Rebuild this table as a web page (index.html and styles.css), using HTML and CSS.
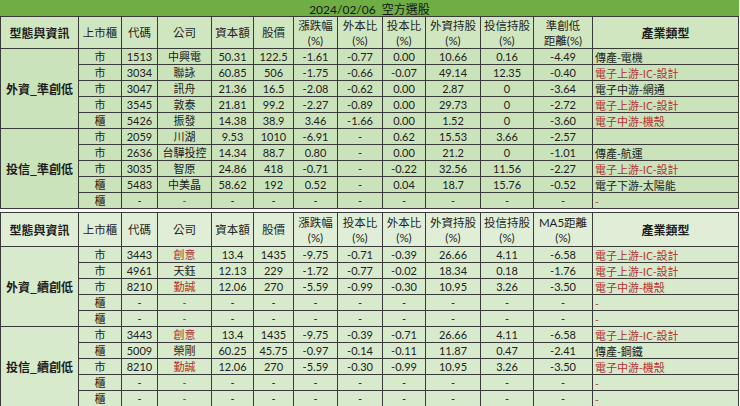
FILE: index.html
```html
<!DOCTYPE html>
<html lang="zh-Hant">
<head>
<meta charset="utf-8">
<title>2024/02/06 空方選股</title>
<link rel="stylesheet" href="styles.css">
</head>
<body>
<div class="sheet">
  <div class="title">2024/02/06&nbsp;&nbsp;空方選股</div>

  <div class="h h1 hk">型態與資訊</div>
  <div class="h h1">上市櫃</div>
  <div class="h h1">代碼</div>
  <div class="h h1">公司</div>
  <div class="h h1">資本額</div>
  <div class="h h1">股價</div>
  <div class="h h1"><span>漲跌幅</span><span class="pc">(%)</span></div>
  <div class="h h1"><span>外本比</span><span class="pc">(%)</span></div>
  <div class="h h1"><span>投本比</span><span class="pc">(%)</span></div>
  <div class="h h1"><span>外資持股</span><span class="pc">(%)</span></div>
  <div class="h h1"><span>投信持股</span><span class="pc">(%)</span></div>
  <div class="h h1"><span>準創低</span><span class="pc">距離(%)</span></div>
  <div class="h h1 hk">產業類型</div>

  <div class="g g1">外資_準創低</div>
  <div class="c">市</div><div class="c n">1513</div><div class="c">中興電</div><div class="c n">50.31</div><div class="c n">122.5</div><div class="c n">-1.61</div><div class="c n">-0.77</div><div class="c n">0.00</div><div class="c n">10.66</div><div class="c n">0.16</div><div class="c n">-4.49</div><div class="c ind">傳產-電機</div>
  <div class="c">市</div><div class="c n">3034</div><div class="c">聯詠</div><div class="c n">60.85</div><div class="c n">506</div><div class="c n">-1.75</div><div class="c n">-0.66</div><div class="c n">-0.07</div><div class="c n">49.14</div><div class="c n">12.35</div><div class="c n">-0.40</div><div class="c ind r">電子上游-IC-設計</div>
  <div class="c">市</div><div class="c n">3047</div><div class="c">訊舟</div><div class="c n">21.36</div><div class="c n">16.5</div><div class="c n">-2.08</div><div class="c n">-0.62</div><div class="c n">0.00</div><div class="c n">2.87</div><div class="c n">0</div><div class="c n">-3.64</div><div class="c ind">電子中游-網通</div>
  <div class="c">市</div><div class="c n">3545</div><div class="c">敦泰</div><div class="c n">21.81</div><div class="c n">99.2</div><div class="c n">-2.27</div><div class="c n">-0.89</div><div class="c n">0.00</div><div class="c n">29.73</div><div class="c n">0</div><div class="c n">-2.72</div><div class="c ind r">電子上游-IC-設計</div>
  <div class="c">櫃</div><div class="c n">5426</div><div class="c">振發</div><div class="c n">14.38</div><div class="c n">38.9</div><div class="c n">3.46</div><div class="c n">-1.66</div><div class="c n">0.00</div><div class="c n">1.52</div><div class="c n">0</div><div class="c n">-3.60</div><div class="c ind r">電子中游-機殼</div>

  <div class="g g1">投信_準創低</div>
  <div class="c">市</div><div class="c n">2059</div><div class="c">川湖</div><div class="c n">9.53</div><div class="c n">1010</div><div class="c n">-6.91</div><div class="c n">-</div><div class="c n">0.62</div><div class="c n">15.53</div><div class="c n">3.66</div><div class="c n">-2.57</div><div class="c ind"></div>
  <div class="c">市</div><div class="c n">2636</div><div class="c">台驊投控</div><div class="c n">14.34</div><div class="c n">88.7</div><div class="c n">0.80</div><div class="c n">-</div><div class="c n">0.00</div><div class="c n">21.2</div><div class="c n">0</div><div class="c n">-1.01</div><div class="c ind">傳產-航運</div>
  <div class="c">市</div><div class="c n">3035</div><div class="c">智原</div><div class="c n">24.86</div><div class="c n">418</div><div class="c n">-0.71</div><div class="c n">-</div><div class="c n">-0.22</div><div class="c n">32.56</div><div class="c n">11.56</div><div class="c n">-2.27</div><div class="c ind r">電子上游-IC-設計</div>
  <div class="c">櫃</div><div class="c n">5483</div><div class="c">中美晶</div><div class="c n">58.62</div><div class="c n">192</div><div class="c n">0.52</div><div class="c n">-</div><div class="c n">0.04</div><div class="c n">18.7</div><div class="c n">15.76</div><div class="c n">-0.52</div><div class="c ind">電子下游-太陽能</div>
  <div class="c">櫃</div><div class="c n">-</div><div class="c n r">-</div><div class="c n">-</div><div class="c n">-</div><div class="c n">-</div><div class="c n">-</div><div class="c n">-</div><div class="c n">-</div><div class="c n">-</div><div class="c n">-</div><div class="c ind r">-</div>

  <div class="sep"></div>

  <div class="h h2 hk">型態與資訊</div>
  <div class="h h2">上市櫃</div>
  <div class="h h2">代碼</div>
  <div class="h h2">公司</div>
  <div class="h h2">資本額</div>
  <div class="h h2">股價</div>
  <div class="h h2"><span>漲跌幅</span><span class="pc">(%)</span></div>
  <div class="h h2"><span>投本比</span><span class="pc">(%)</span></div>
  <div class="h h2"><span>外本比</span><span class="pc">(%)</span></div>
  <div class="h h2"><span>外資持股</span><span class="pc">(%)</span></div>
  <div class="h h2"><span>投信持股</span><span class="pc">(%)</span></div>
  <div class="h h2"><span class="pc">MA5距離</span><span class="pc">(%)</span></div>
  <div class="h h2 hk">產業類型</div>

  <div class="g g2">外資_續創低</div>
  <div class="c s2">市</div><div class="c s2 n">3443</div><div class="c s2 r">創意</div><div class="c s2 n">13.4</div><div class="c s2 n">1435</div><div class="c s2 n">-9.75</div><div class="c s2 n">-0.71</div><div class="c s2 n">-0.39</div><div class="c s2 n">26.66</div><div class="c s2 n">4.11</div><div class="c s2 n">-6.58</div><div class="c s2 ind r">電子上游-IC-設計</div>
  <div class="c s2">市</div><div class="c s2 n">4961</div><div class="c s2">天鈺</div><div class="c s2 n">12.13</div><div class="c s2 n">229</div><div class="c s2 n">-1.72</div><div class="c s2 n">-0.77</div><div class="c s2 n">-0.02</div><div class="c s2 n">18.34</div><div class="c s2 n">0.18</div><div class="c s2 n">-1.76</div><div class="c s2 ind r">電子上游-IC-設計</div>
  <div class="c s2">市</div><div class="c s2 n">8210</div><div class="c s2 r">勤誠</div><div class="c s2 n">12.06</div><div class="c s2 n">270</div><div class="c s2 n">-5.59</div><div class="c s2 n">-0.99</div><div class="c s2 n">-0.30</div><div class="c s2 n">10.95</div><div class="c s2 n">3.26</div><div class="c s2 n">-3.50</div><div class="c s2 ind r">電子中游-機殼</div>
  <div class="c s2">櫃</div><div class="c s2 n">-</div><div class="c s2 n r">-</div><div class="c s2 n">-</div><div class="c s2 n">-</div><div class="c s2 n">-</div><div class="c s2 n">-</div><div class="c s2 n">-</div><div class="c s2 n">-</div><div class="c s2 n">-</div><div class="c s2 n">-</div><div class="c s2 ind r">-</div>
  <div class="c s2">櫃</div><div class="c s2 n">-</div><div class="c s2 n r">-</div><div class="c s2 n">-</div><div class="c s2 n">-</div><div class="c s2 n">-</div><div class="c s2 n">-</div><div class="c s2 n">-</div><div class="c s2 n">-</div><div class="c s2 n">-</div><div class="c s2 n">-</div><div class="c s2 ind r">-</div>

  <div class="g g2">投信_續創低</div>
  <div class="c s2">市</div><div class="c s2 n">3443</div><div class="c s2 r">創意</div><div class="c s2 n">13.4</div><div class="c s2 n">1435</div><div class="c s2 n">-9.75</div><div class="c s2 n">-0.39</div><div class="c s2 n">-0.71</div><div class="c s2 n">26.66</div><div class="c s2 n">4.11</div><div class="c s2 n">-6.58</div><div class="c s2 ind r">電子上游-IC-設計</div>
  <div class="c s2">櫃</div><div class="c s2 n">5009</div><div class="c s2">榮剛</div><div class="c s2 n">60.25</div><div class="c s2 n">45.75</div><div class="c s2 n">-0.97</div><div class="c s2 n">-0.14</div><div class="c s2 n">-0.11</div><div class="c s2 n">11.87</div><div class="c s2 n">0.47</div><div class="c s2 n">-2.41</div><div class="c s2 ind">傳產-鋼鐵</div>
  <div class="c s2">市</div><div class="c s2 n">8210</div><div class="c s2 r">勤誠</div><div class="c s2 n">12.06</div><div class="c s2 n">270</div><div class="c s2 n">-5.59</div><div class="c s2 n">-0.30</div><div class="c s2 n">-0.99</div><div class="c s2 n">10.95</div><div class="c s2 n">3.26</div><div class="c s2 n">-3.50</div><div class="c s2 ind r">電子中游-機殼</div>
  <div class="c s2">櫃</div><div class="c s2 n">-</div><div class="c s2 n r">-</div><div class="c s2 n">-</div><div class="c s2 n">-</div><div class="c s2 n">-</div><div class="c s2 n">-</div><div class="c s2 n">-</div><div class="c s2 n">-</div><div class="c s2 n">-</div><div class="c s2 n">-</div><div class="c s2 ind r">-</div>
  <div class="c s2">櫃</div><div class="c s2 n">-</div><div class="c s2 n r">-</div><div class="c s2 n">-</div><div class="c s2 n">-</div><div class="c s2 n">-</div><div class="c s2 n">-</div><div class="c s2 n">-</div><div class="c s2 n">-</div><div class="c s2 n">-</div><div class="c s2 n">-</div><div class="c s2 ind r">-</div>
</div>
</body>
</html>
```

FILE: styles.css
```css
html, body {
  margin: 0;
  padding: 0;
  background: #ffffff;
}

.sheet {
  display: grid;
  width: 739px;
  box-sizing: border-box;
  padding: 0 1px;
  gap: 1px;
  background: #3a3a3a;
  grid-template-columns: 77px 42px 35px 53px 41px 39px 43px 44px 42px 54px 52px 58px 145px;
  grid-template-rows: 16px 31px repeat(10, 15px) 3px 33px repeat(10, 15px);
  font-family: Lato, "Noto Sans CJK TC", sans-serif;
  font-size: 11px;
  color: #222222;
  height: 406px;
  overflow: hidden;
}

.title {
  grid-column: 1 / -1;
  background: #6fae45;
  display: flex;
  align-items: center;
  justify-content: center;
  font-size: 12px;
  color: #161616;
  margin: 0 -1px;
}

.h {
  display: flex;
  flex-direction: column;
  align-items: center;
  justify-content: center;
  font-family: "Noto Sans CJK TC", sans-serif;
  font-size: 11.5px;
  line-height: 15px;
  color: #1e1e1e;
}

.h .pc {
  font-family: Lato, "Noto Sans CJK TC", sans-serif;
  font-size: 11.5px;
}

.h1 { background: #d0e6c1; }
.h2 { background: #e0eed7; }

.hk {
  font-weight: 700;
  font-size: 12px;
}

.g {
  grid-row: span 5;
  display: flex;
  align-items: center;
  justify-content: center;
  font-family: "Noto Sans CJK TC", sans-serif;
  font-weight: 700;
  font-size: 12px;
  color: #1e1e1e;
}

.g1 { background: #cbe3bb; }
.g2 { background: #d8eacc; }

.c {
  display: flex;
  align-items: center;
  justify-content: center;
  line-height: 15px;
  white-space: nowrap;
  background: #cbe3bb;
  font-family: "Noto Sans CJK TC", sans-serif;
  font-size: 11px;
}

.c.s2 { background: #d8eacc; }

.c.n {
  font-family: Lato, "Noto Sans CJK TC", sans-serif;
  font-size: 11px;
}

.c.ind {
  justify-content: flex-start;
  align-items: flex-start;
  padding: 1px 0 0 2px;
  line-height: 14px;
  font-size: 11px;
}

.r { color: #b52f2f; }

.sep {
  grid-column: 1 / -1;
  background: #f4f7f2;
  margin: 0 -1px;
}
```
